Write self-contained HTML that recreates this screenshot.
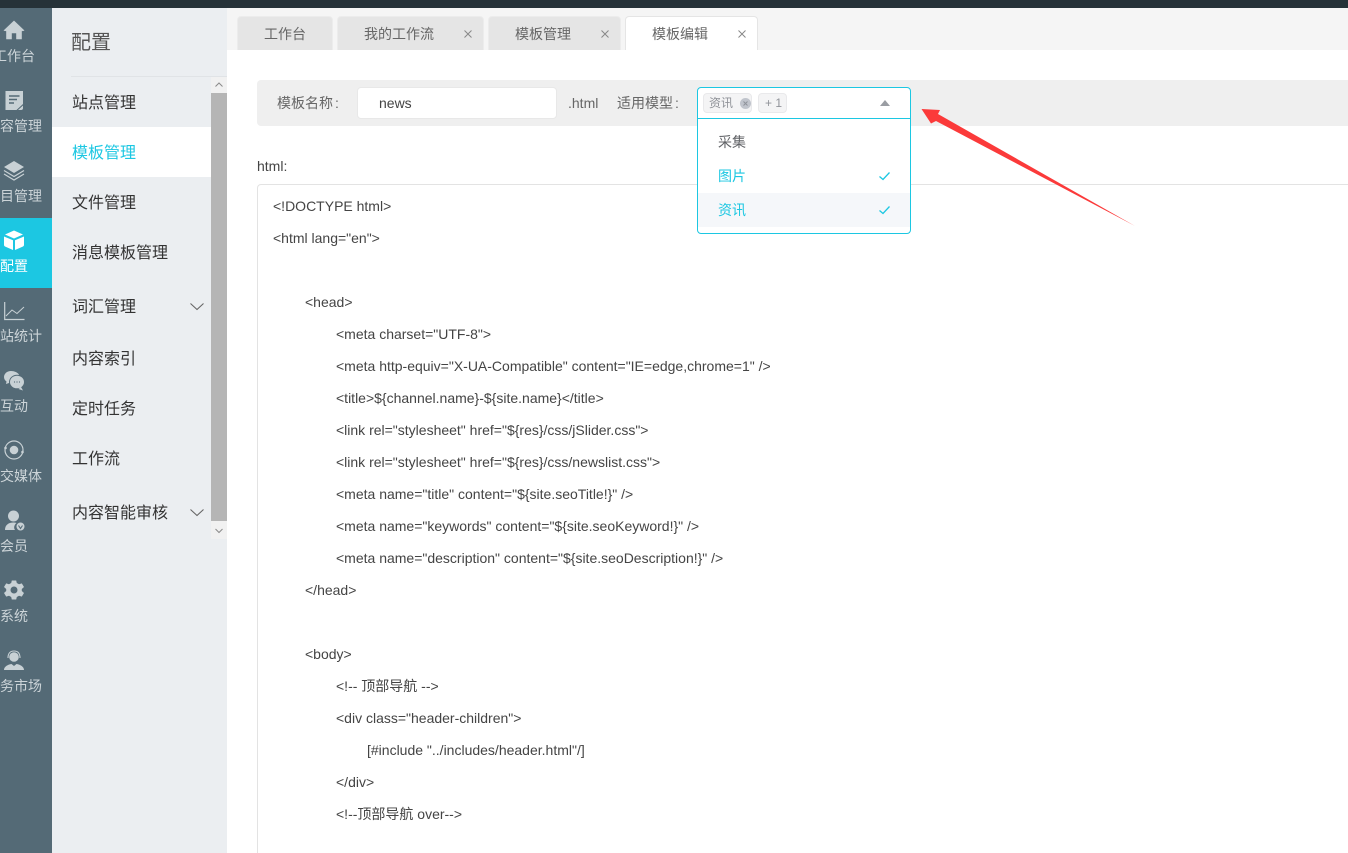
<!DOCTYPE html>
<html lang="zh-CN">
<head>
<meta charset="utf-8">
<title>模板编辑</title>
<style>
html,body{margin:0;padding:0;background:#fff;width:1348px;height:853px;overflow:hidden;}
body{position:relative;font-family:"Liberation Sans","Noto Sans CJK SC",sans-serif;font-size:14px;color:#333;}
.a{position:absolute;white-space:pre;}
.t{position:absolute;white-space:pre;line-height:20px;}
#top{left:0;top:0;width:1348px;height:8px;background:#263238;}
#nav{left:0;top:8px;width:52px;height:845px;background:#546a76;}
#act{left:0;top:218px;width:52px;height:70px;background:#1cc7e2;}
.nl{position:absolute;left:-22px;width:72px;text-align:center;color:#ccd4d8;font-size:14px;line-height:20px;white-space:nowrap;}
.ic{position:absolute;left:2px;width:24px;height:24px;}
#side{left:52px;top:8px;width:175px;height:845px;background:#ebeef1;}
.m{position:absolute;left:72px;font-size:16px;line-height:24px;color:#333;white-space:pre;}
.tab{position:absolute;top:16px;height:34px;background:#e5e5e5;border:1px solid #ececec;border-bottom:none;border-radius:4px 4px 0 0;box-sizing:border-box;}
.tt{position:absolute;top:24px;line-height:20px;color:#666;font-size:14px;white-space:pre;}
.code{position:absolute;font-size:14px;line-height:20px;color:#444;white-space:pre;}
.c{margin-left:2px;}
</style>
</head>
<body>
<div class="a" id="top"></div>
<div class="a" id="nav"></div>
<div class="a" id="act"></div>

<!-- left nav icons -->
<svg class="ic" style="top:18px" viewBox="0 0 24 24"><path d="M12 3 L22 12.500 L19.500 13 L19.500 21 L14.500 21 L14.500 15 L9.500 15 L9.500 21 L4.500 21 L4.500 13 L2 12.500 Z" fill="#c8d1d5" stroke="#c8d1d5" stroke-width="0.600" stroke-linejoin="round"/></svg>
<svg class="ic" style="top:88px" viewBox="0 0 24 24"><path d="M3.500 3 H21 V16 L14.500 22 H3.500 Z" fill="#c8d1d5"/><path d="M7 8 H17.500 M7 11.500 H15 M7 15 H12" stroke="#546a76" stroke-width="1.500" fill="none"/><path d="M16 22 L21 17.500 V20 Q21 22 19 22 Z" fill="#c8d1d5"/></svg>
<svg class="ic" style="top:158px" viewBox="0 0 24 24"><path d="M12 3 L22 9 L12 15 L2 9 Z" fill="#c8d1d5"/><path d="M2 12.500 L12 18.500 L22 12.500 M2 16 L12 22 L22 16" stroke="#c8d1d5" stroke-width="1.200" fill="none"/></svg>
<svg class="ic" style="top:228px" viewBox="0 0 24 24"><path d="M12 2.500 L21 6.500 L12 10.500 L3 6.500 Z" fill="#fff"/><path d="M2 8.500 L11 12.300 V22 L3 18.500 Q2 18 2 17 Z M22 8.500 L13 12.300 V22 L21 18.500 Q22 18 22 17 Z" fill="#fff"/></svg>
<svg class="ic" style="top:298px" viewBox="0 0 24 24"><path d="M2.700 4 V21.500 H22.500" stroke="#c8d1d5" stroke-width="1.200" fill="none"/><path d="M4 18 L10 12 L15 15.500 L22 9" stroke="#c8d1d5" stroke-width="1" fill="none"/></svg>
<svg class="ic" style="top:368px" viewBox="0 0 24 24"><path d="M9 3 C5 3 2 5.800 2 9 C2 11 3 12.500 4.500 13.500 L4 16 L7 15 C8 15.300 9 15.300 10 15.200 L17 6.500 C15.500 4.500 12.500 3 9 3 Z" fill="#c8d1d5"/><ellipse cx="15" cy="14" rx="7.500" ry="6.800" fill="#c8d1d5" stroke="#546a76" stroke-width="1"/><path d="M19 19 L21 22.500 L16.500 21 Z" fill="#c8d1d5"/><circle cx="12.500" cy="14" r="0.600" fill="#546a76"/><circle cx="15" cy="14" r="0.600" fill="#546a76"/><circle cx="17.500" cy="14" r="0.600" fill="#546a76"/></svg>
<svg class="ic" style="top:438px" viewBox="0 0 24 24"><circle cx="12" cy="12" r="9" stroke="#c8d1d5" stroke-width="1.200" fill="none"/><circle cx="12" cy="12" r="4.300" fill="#c8d1d5"/><circle cx="20.500" cy="14" r="1.300" fill="#c8d1d5"/><circle cx="3.500" cy="10" r="1.300" fill="#c8d1d5"/></svg>
<svg class="ic" style="top:508px" viewBox="0 0 24 24"><circle cx="11.500" cy="8" r="5.500" fill="#c8d1d5"/><path d="M3 22 C3 16.500 7 14.500 11.500 14.500 C12.500 14.500 13.500 14.600 14.500 15 C12 17 11.500 20 13 22 Z" fill="#c8d1d5"/><circle cx="18.500" cy="18.500" r="4.500" fill="#c8d1d5" stroke="#546a76" stroke-width="1"/><path d="M16.500 17.500 L18.500 20.500 L20.500 17.500" stroke="#546a76" stroke-width="1.100" fill="none"/></svg>
<svg class="ic" style="top:578px" viewBox="0 0 24 24"><path fill-rule="evenodd" fill="#c8d1d5" d="M9.800 2.500 H14.200 L14.800 5 L17 6.200 L19.800 5.400 L22 9 L19.800 11 V13 L22 15 L19.800 18.600 L17 17.800 L14.800 19 L14.200 21.500 H9.800 L9.200 19 L7 17.800 L4.200 18.600 L2 15 L4.200 13 V11 L2 9 L4.200 5.400 L7 6.200 L9.200 5 Z M12 8.500 A3.500 3.500 0 1 0 12 15.500 A3.500 3.500 0 1 0 12 8.500 Z"/></svg>
<svg class="ic" style="top:648px" viewBox="0 0 24 24"><circle cx="12" cy="9" r="4.800" fill="#c8d1d5"/><path d="M6 10 C6 5.500 8 3 12 3 C16 3 18 5.500 18 10" stroke="#c8d1d5" stroke-width="1.100" fill="none"/><path d="M2 22 C2 18.500 6 16.500 9.500 16 L12 18 L14.500 16 C18 16.500 22 18.500 22 22 Z" fill="#c8d1d5"/></svg>

<div class="nl" style="top:46px">工作台</div>
<div class="nl" style="top:116px">内容管理</div>
<div class="nl" style="top:186px">栏目管理</div>
<div class="nl" style="top:256px;color:#fff">配置</div>
<div class="nl" style="top:326px">网站统计</div>
<div class="nl" style="top:396px">互动</div>
<div class="nl" style="top:466px">社交媒体</div>
<div class="nl" style="top:536px">会员</div>
<div class="nl" style="top:606px">系统</div>
<div class="nl" style="top:676px">服务市场</div>

<!-- secondary side -->
<div class="a" id="side"></div>
<div class="a" style="left:71px;top:29px;font-size:20px;line-height:28px;color:#555">配置</div>
<div class="a" style="left:71px;top:76px;width:156px;height:1px;background:#e0e3e6"></div>
<div class="a" style="left:52px;top:127px;width:159px;height:50px;background:#fff"></div>
<div class="a" style="left:211px;top:77px;width:16px;height:462px;background:#f1f1f1"></div>
<div class="a" style="left:211px;top:93px;width:16px;height:428px;background:#b5b5b5"></div>
<svg class="a" style="left:211px;top:77px" width="16" height="16"><path d="M4.500 9.500 L8 6 L11.500 9.500" stroke="#8a8a8a" fill="none"/></svg>
<svg class="a" style="left:211px;top:523px" width="16" height="16"><path d="M4.500 6 L8 9.500 L11.500 6" stroke="#8a8a8a" fill="none"/></svg>

<div class="m" style="top:92px">站点管理</div>
<div class="m" style="top:142px;color:#1cc7e2">模板管理</div>
<div class="m" style="top:192px">文件管理</div>
<div class="m" style="top:242px">消息模板管理</div>
<div class="m" style="top:296px">词汇管理</div>
<div class="m" style="top:348px">内容索引</div>
<div class="m" style="top:398px">定时任务</div>
<div class="m" style="top:448px">工作流</div>
<div class="m" style="top:502px">内容智能审核</div>
<svg class="a" style="left:189px;top:301px" width="16" height="12"><path d="M1.500 2.500 L8 8.500 L14.500 2.500" stroke="#666" stroke-width="1.100" fill="none"/></svg>
<svg class="a" style="left:189px;top:507px" width="16" height="12"><path d="M1.500 2.500 L8 8.500 L14.500 2.500" stroke="#666" stroke-width="1.100" fill="none"/></svg>

<!-- tabs -->
<div class="a" style="left:227px;top:8px;width:1121px;height:42px;background:#f5f5f5"></div>
<div class="tab" style="left:237px;width:96px"></div>
<div class="tab" style="left:337px;width:147px"></div>
<div class="tab" style="left:488px;width:133px"></div>
<div class="tab" style="left:625px;width:133px;background:#fff;border-color:#e5e5e5"></div>
<div class="tt" style="left:264px">工作台</div>
<div class="tt" style="left:364px">我的工作流</div>
<div class="tt" style="left:515px">模板管理</div>
<div class="tt" style="left:652px">模板编辑</div>
<svg class="a" style="left:464px;top:30px" width="8" height="8"><path d="M0.500 0.500 L7.500 7.500 M7.500 0.500 L0.500 7.500" stroke="#888" fill="none"/></svg>
<svg class="a" style="left:601px;top:30px" width="8" height="8"><path d="M0.500 0.500 L7.500 7.500 M7.500 0.500 L0.500 7.500" stroke="#888" fill="none"/></svg>
<svg class="a" style="left:738px;top:30px" width="8" height="8"><path d="M0.500 0.500 L7.500 7.500 M7.500 0.500 L0.500 7.500" stroke="#888" fill="none"/></svg>

<!-- form bar -->
<div class="a" style="left:257px;top:80px;width:1091px;height:46px;background:#efefef;border-radius:4px 0 0 4px"></div>
<div class="t" style="left:277px;top:93px;color:#666">模板名称<span class="c">:</span></div>
<div class="a" style="left:357px;top:87px;width:200px;height:32px;background:#fff;border:1px solid #e8e8e8;border-radius:4px;box-sizing:border-box"></div>
<div class="t" style="left:379px;top:93px;color:#444">news</div>
<div class="t" style="left:568px;top:93px;color:#666">.html</div>
<div class="t" style="left:617px;top:93px;color:#666">适用模型<span class="c">:</span></div>

<!-- code box -->
<div class="t" style="left:257px;top:156px;color:#444">html:</div>
<div class="a" style="left:257px;top:184px;width:1100px;height:669px;border:1px solid #e3e3e3;border-bottom:none;border-radius:4px 4px 0 0;box-sizing:border-box;background:#fff"></div>
<div class="code" style="left:273px;top:196px">&lt;!DOCTYPE html&gt;</div>
<div class="code" style="left:273px;top:228px">&lt;html lang="en"&gt;</div>
<div class="code" style="left:305px;top:292px">&lt;head&gt;</div>
<div class="code" style="left:336px;top:324px">&lt;meta charset="UTF-8"&gt;</div>
<div class="code" style="left:336px;top:356px">&lt;meta http-equiv="X-UA-Compatible" content="IE=edge,chrome=1" /&gt;</div>
<div class="code" style="left:336px;top:388px">&lt;title&gt;${channel.name}-${site.name}&lt;/title&gt;</div>
<div class="code" style="left:336px;top:420px">&lt;link rel="stylesheet" href="${res}/css/jSlider.css"&gt;</div>
<div class="code" style="left:336px;top:452px">&lt;link rel="stylesheet" href="${res}/css/newslist.css"&gt;</div>
<div class="code" style="left:336px;top:484px">&lt;meta name="title" content="${site.seoTitle!}" /&gt;</div>
<div class="code" style="left:336px;top:516px">&lt;meta name="keywords" content="${site.seoKeyword!}" /&gt;</div>
<div class="code" style="left:336px;top:548px">&lt;meta name="description" content="${site.seoDescription!}" /&gt;</div>
<div class="code" style="left:305px;top:580px">&lt;/head&gt;</div>
<div class="code" style="left:305px;top:644px">&lt;body&gt;</div>
<div class="code" style="left:336px;top:676px">&lt;!-- 顶部导航 --&gt;</div>
<div class="code" style="left:336px;top:708px">&lt;div class="header-children"&gt;</div>
<div class="code" style="left:367px;top:740px">[#include "../includes/header.html"/]</div>
<div class="code" style="left:336px;top:772px">&lt;/div&gt;</div>
<div class="code" style="left:336px;top:804px">&lt;!--顶部导航 over--&gt;</div>

<!-- select + dropdown -->
<div class="a" style="left:697px;top:87px;width:214px;height:147px;background:#fff;border:1px solid #1cc7e2;border-radius:4px;box-sizing:border-box"></div>
<div class="a" style="left:697px;top:118px;width:214px;height:1px;background:#1cc7e2"></div>
<div class="a" style="left:703px;top:93px;width:49px;height:20px;background:#f4f4f5;border:1px solid #e9e9eb;border-radius:4px;box-sizing:border-box"></div>
<div class="a" style="left:709px;top:94px;font-size:12px;line-height:18px;color:#909399">资讯</div>
<svg class="a" style="left:739px;top:97px" width="13" height="13"><circle cx="6.500" cy="6.500" r="5.500" fill="#c0c4cc"/><path d="M4.500 4.500 L8.500 8.500 M8.500 4.500 L4.500 8.500" stroke="#8f939b" stroke-width="1" fill="none"/></svg>
<div class="a" style="left:758px;top:93px;width:29px;height:20px;background:#f4f4f5;border:1px solid #e9e9eb;border-radius:4px;box-sizing:border-box"></div>
<div class="a" style="left:765px;top:94px;font-size:12px;line-height:18px;color:#909399">+ 1</div>
<svg class="a" style="left:879px;top:99px" width="12" height="8"><path d="M1 7 L6 1 L11 7 Z" fill="#9a9da3"/></svg>
<div class="t" style="left:718px;top:132px;color:#606266">采集</div>
<div class="t" style="left:718px;top:166px;color:#1cc7e2">图片</div>
<div class="a" style="left:698px;top:193px;width:212px;height:34px;background:#f5f7fa"></div>
<div class="t" style="left:718px;top:200px;color:#1cc7e2">资讯</div>
<svg class="a" style="left:878px;top:170px" width="13" height="12"><path d="M1.500 6.500 L5 9.500 L11.500 2.500" stroke="#1cc7e2" stroke-width="1.300" fill="none"/></svg>
<svg class="a" style="left:878px;top:204px" width="13" height="12"><path d="M1.500 6.500 L5 9.500 L11.500 2.500" stroke="#1cc7e2" stroke-width="1.300" fill="none"/></svg>

<!-- red arrow -->
<svg class="a" style="left:915px;top:100px" width="230" height="135"><path d="M6.500 9 L25 10 L23 14 L220 126 L21 21 L16 23.500 Z" fill="#fb3a3a"/></svg>
</body>
</html>
